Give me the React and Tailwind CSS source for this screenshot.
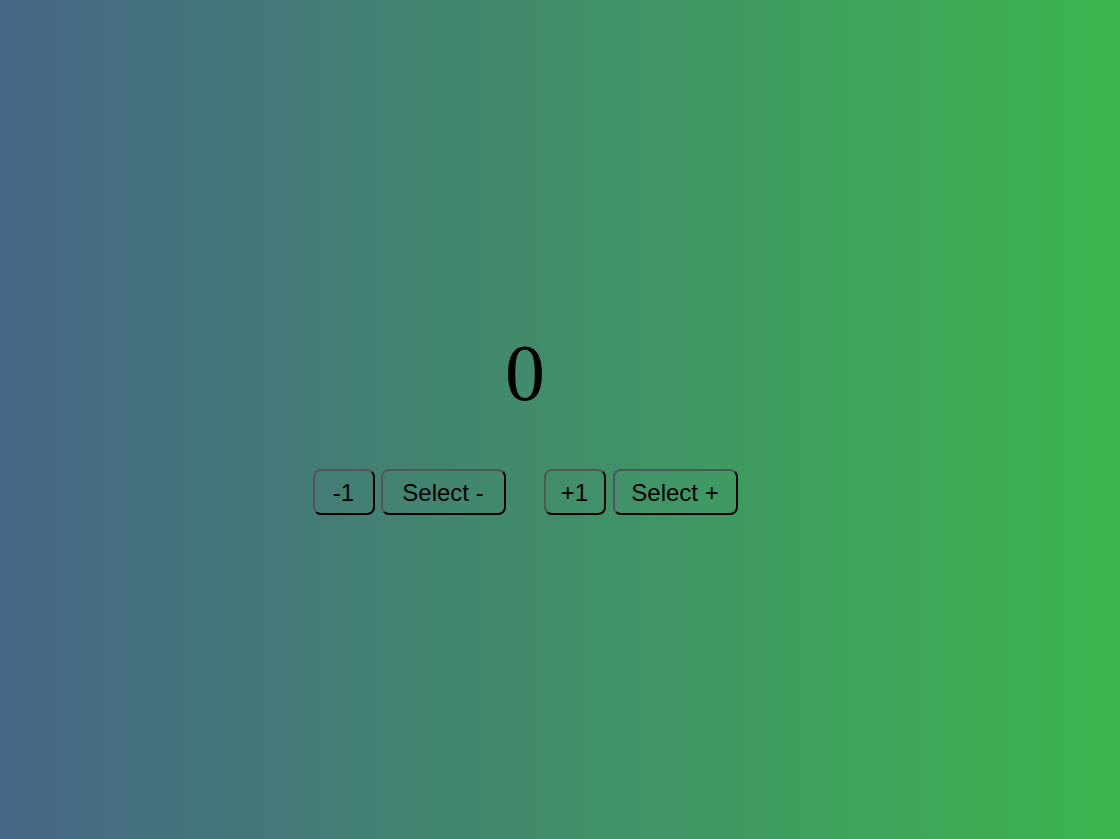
export default function App() {
  const btn =
    "h-[46px] rounded-[8px] border-2 border-t-[#555555] border-l-[#555555] border-r-black border-b-black bg-transparent text-[24px] leading-none text-black flex items-center justify-center pt-[1px]";
  return (
    <div className="w-full h-[839px] bg-[linear-gradient(to_right,#466686,#3cb54e)] flex flex-col items-center pr-[70px] pt-[333px]">
      <div
        className="text-[80px] leading-none text-black"
        style={{ fontFamily: '"Liberation Serif", "Times New Roman", serif' }}
      >
        0
      </div>
      <div
        className="mt-[56px] flex items-center gap-[38px]"
        style={{ fontFamily: '"Liberation Sans", Arial, sans-serif' }}
      >
        <div className="flex gap-[6px]">
          <button className={`${btn} w-[62px]`}>-1</button>
          <button className={`${btn} w-[125px]`}>Select -</button>
        </div>
        <div className="flex gap-[7px]">
          <button className={`${btn} w-[62px]`}>+1</button>
          <button className={`${btn} w-[125px]`}>Select +</button>
        </div>
      </div>
    </div>
  );
}
